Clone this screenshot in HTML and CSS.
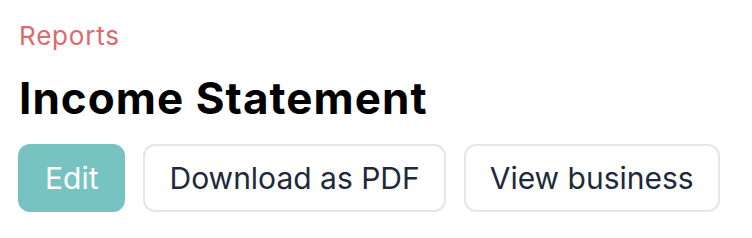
FILE: index.html
```html
<!DOCTYPE html>
<html lang="en">
<head>
<meta charset="utf-8">
<title>Income Statement</title>
<link rel="stylesheet" href="styles.css">
</head>
<body>
<div class="page">
  <div class="crumb">Reports</div>
  <h1 class="title">Income Statement</h1>
  <div class="actions">
    <button class="btn btn-primary">Edit</button>
    <button class="btn btn-outline">Download as PDF</button>
    <button class="btn btn-outline">View business</button>
  </div>
</div>
</body>
</html>
```
FILE: styles.css
```css
* { box-sizing: border-box; }
html, body { margin: 0; background: #ffffff; }
body { font-family: Inter, "Noto Sans", sans-serif; }
.page { padding: 20px 18px 0 19px; }
.crumb {
  font-size: 26px;
  line-height: 32px;
  letter-spacing: 0.8px;
  color: #dc6a6a;
}
.title {
  margin: 20px 0 0 0;
  font-size: 44px;
  line-height: 52px;
  font-weight: 700;
  letter-spacing: 1.05px;
  color: #000000;
}
.actions {
  margin: 20px 0 0 -1px;
  display: flex;
  gap: 18px;
}
.btn {
  font-family: inherit;
  font-size: 30px;
  line-height: 36px;
  padding: 14px 24px;
  border-radius: 12px;
  border: 2px solid transparent;
  height: 68px;
  cursor: pointer;
}
.btn-primary {
  padding: 14px 25px;
  background: #77c3c2;
  border-color: #77c3c2;
  color: #ffffff;
}
.btn-outline {
  background: #ffffff;
  border-color: #e5e5eb;
  color: #1e293b;
}
```
